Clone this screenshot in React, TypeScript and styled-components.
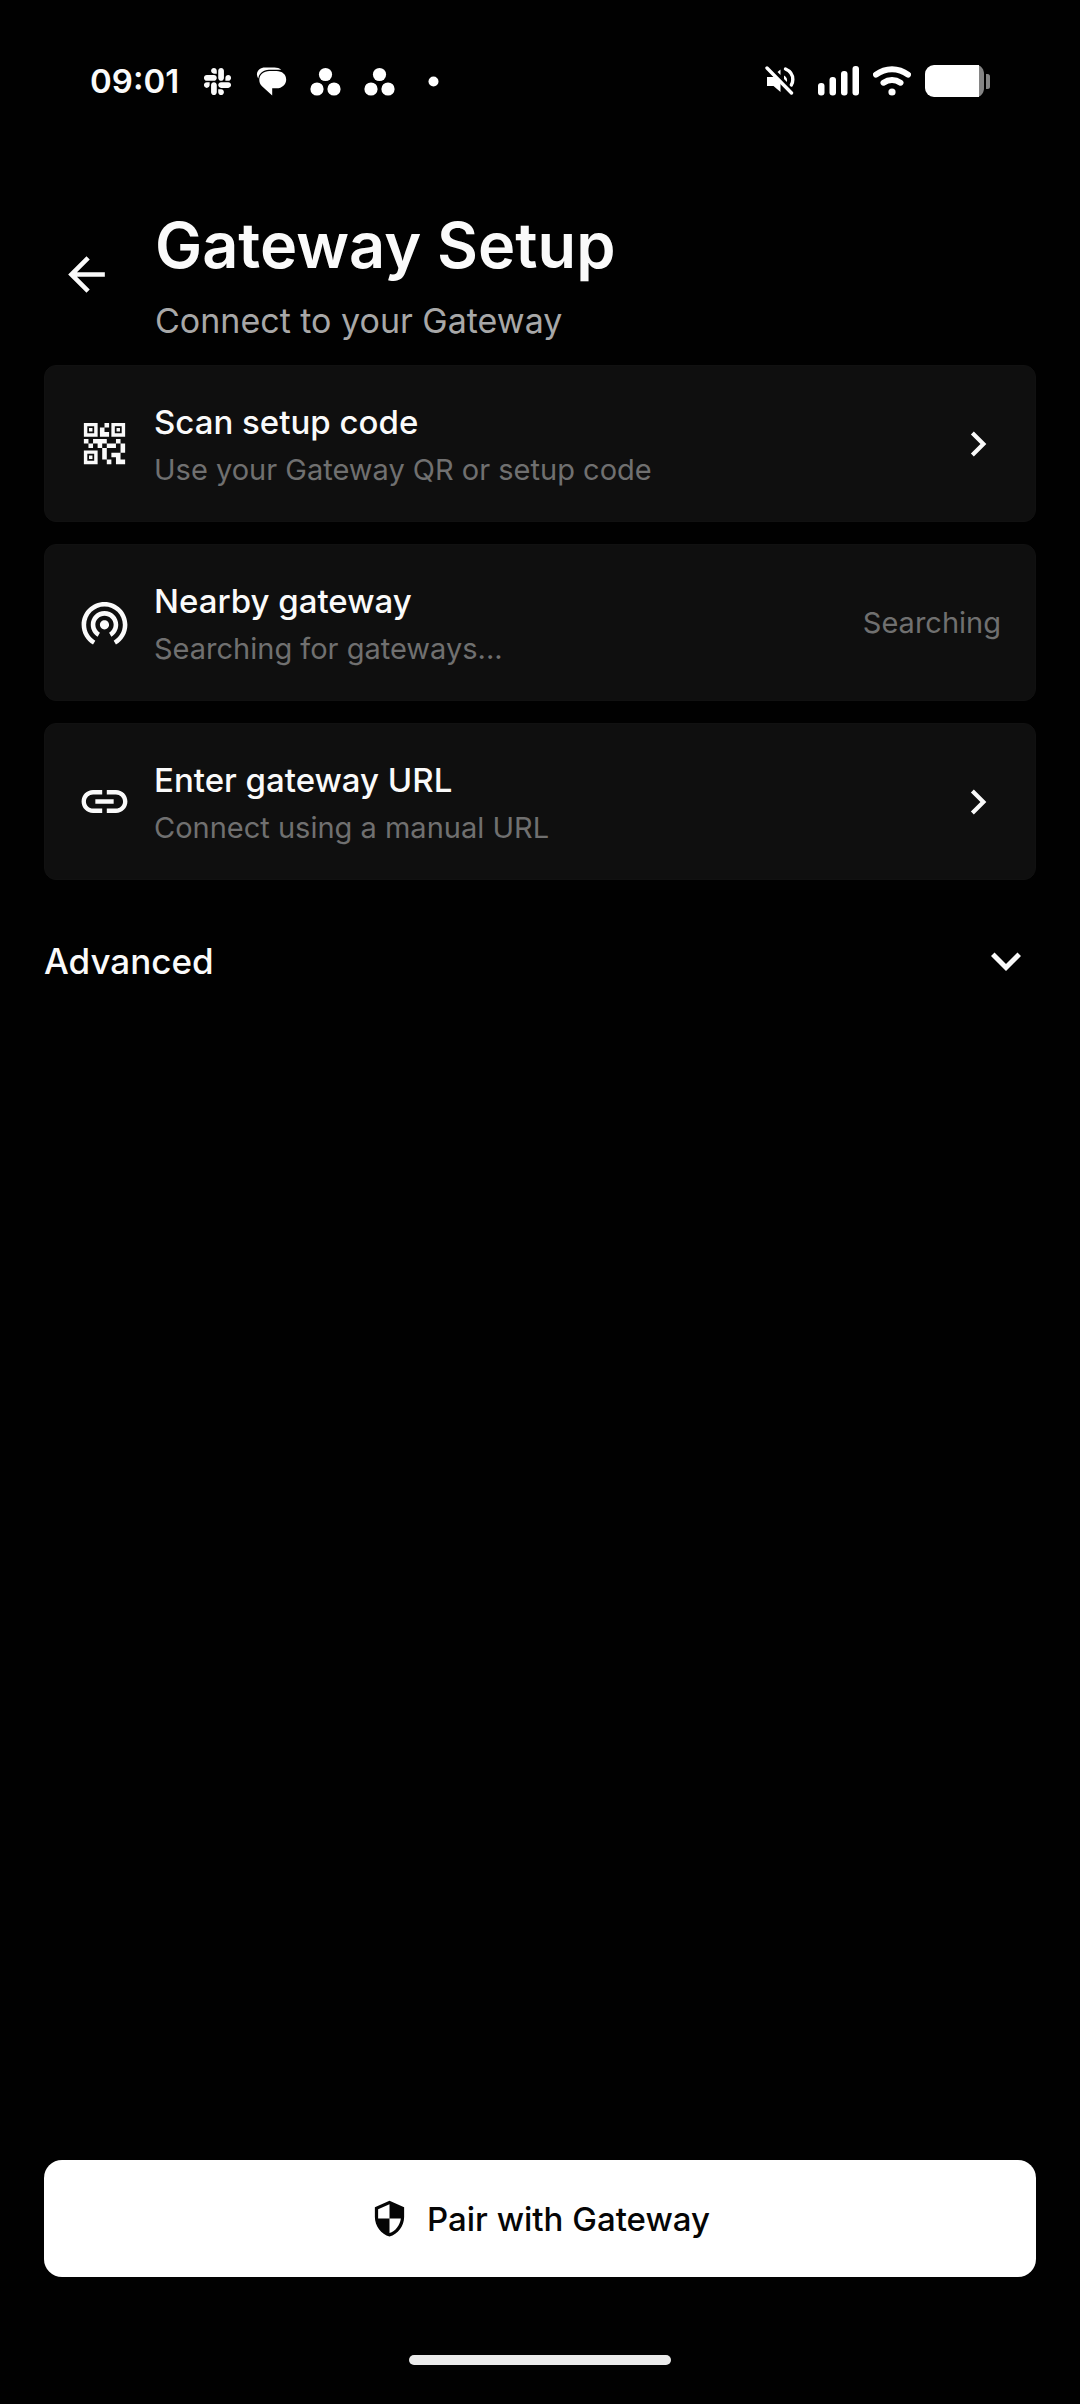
import React, { useState } from "react";
import type { ReactNode } from "react";
import styled, { createGlobalStyle } from "styled-components";
import {
  MdArrowBack,
  MdChevronRight,
  MdExpandMore,
  MdLink,
  MdQrCode2,
  MdSecurity,
  MdWifiTethering,
} from "react-icons/md";
import { FaSlack } from "react-icons/fa";

const colors = {
  page: "#010101",
  card: "#0f0f0f",
  cardEdge: "#111111",
  text: "#fafafa",
  secondary: "#a8a8a8",
  muted: "#707070",
};

const GlobalStyle = createGlobalStyle`
  *, *::before, *::after { box-sizing: border-box; }
  body {
    margin: 0;
    background: ${colors.page};
    color: ${colors.text};
    font-family: Inter, "Noto Sans", sans-serif;
  }
  button { font: inherit; color: inherit; border: 0; cursor: pointer; }
  svg { display: block; flex-shrink: 0; }
  h1, h2, p { margin: 0; }
`;

const Screen = styled.div`
  display: flex;
  flex-direction: column;
  min-height: 100vh;
  padding-bottom: 39px;
`;

const StatusBar = styled.div`
  display: flex;
  align-items: center;
  justify-content: space-between;
  height: 162px;
  padding: 0 90px;
`;

const StatusGroup = styled.div<{ $gap: number }>`
  display: flex;
  align-items: center;
  gap: ${({ $gap }) => $gap}px;
`;

const Clock = styled.time`
  font-size: 33px;
  line-height: 40px;
  font-weight: 600;
`;

const Main = styled.main`
  display: flex;
  flex-direction: column;
  flex: 1;
  gap: 22px;
  padding: 43px 44px 0;
`;

const Header = styled.header`
  display: flex;
  align-items: center;
  gap: 27px;
`;

const BackButton = styled.button`
  display: flex;
  align-items: center;
  justify-content: center;
  width: 84px;
  height: 84px;
  padding: 0;
  border-radius: 50%;
  background: transparent;
`;

const HeaderText = styled.div`
  display: flex;
  flex-direction: column;
  gap: 14px;
`;

const Title = styled.h1`
  font-size: 63px;
  line-height: 80px;
  font-weight: 600;
`;

const Subtitle = styled.p`
  font-size: 34px;
  line-height: 44px;
  color: ${colors.secondary};
`;

const OptionCard = styled.button`
  display: flex;
  align-items: center;
  gap: 22px;
  width: 100%;
  min-height: 157px;
  padding: 28px 32px;
  border: 1px solid ${colors.cardEdge};
  border-radius: 12px;
  background: ${colors.card};
  text-align: left;
`;

const OptionText = styled.span`
  display: flex;
  flex-direction: column;
  flex: 1;
`;

const OptionTitle = styled.span`
  font-size: 33px;
  line-height: 52px;
  font-weight: 500;
`;

const OptionHint = styled.span`
  font-size: 29px;
  line-height: 44px;
  color: ${colors.muted};
`;

const OptionStatus = styled(OptionHint)`
  padding-right: 2px;
`;

const AdvancedToggle = styled.button`
  display: flex;
  align-items: center;
  justify-content: space-between;
  padding: 29px 0;
  background: transparent;
  font-size: 35px;
  line-height: 52px;
  font-weight: 500;
`;

const Footer = styled.footer`
  display: flex;
  flex-direction: column;
  align-items: center;
  gap: 78px;
  padding: 0 44px;
`;

const PairButton = styled.button`
  display: flex;
  align-items: center;
  justify-content: center;
  gap: 18px;
  width: 100%;
  min-height: 117px;
  border-radius: 18px;
  background: #ffffff;
  color: #050505;
  font-size: 33px;
  line-height: 44px;
  font-weight: 500;
`;

const HomeIndicator = styled.div`
  width: 262px;
  height: 10px;
  border-radius: 5px;
  background: #ebebeb;
`;

const SignalGroup = styled(StatusGroup)`
  padding-left: 9px;
`;

const ChatIcon = () => (
  <svg width="31" height="31" viewBox="0 0 31 31" aria-hidden="true" fill="#fff">
    <path d="M9 1.600h9.500c2.600 0 5 .8 6.800 2.200H13C7.200 4 3.200 7.200 2.300 12.400A9 9 0 0 1 .9 8.500C1.200 4.200 4.800 1.600 9 1.600z" />
    <path d="M13.500 4.900h7c5.600 0 9.700 3.500 9.700 8.500s-4.100 8.800-9.700 8.800H16.200v7.400L6 20.200c-2-1.700-2.700-4-2.700-6.500 0-5.300 4.400-8.800 10.200-8.800z" />
  </svg>
);

const AsanaIcon = () => (
  <svg width="31" height="31" viewBox="0 0 31 31" aria-hidden="true" fill="#fff">
    <circle cx="15.500" cy="8.500" r="6.600" />
    <circle cx="7" cy="23" r="6.600" />
    <circle cx="24" cy="23" r="6.600" />
  </svg>
);

const DotIcon = () => (
  <svg width="31" height="31" viewBox="0 0 31 31" aria-hidden="true">
    <circle cx="15.500" cy="15.500" r="5" fill="#fff" />
  </svg>
);

const MutedIcon = () => (
  <svg width="30" height="32" viewBox="0 0 30 32" aria-hidden="true" fill="none">
    <path d="M2 12h7l6.500 6v9L8.500 21H2z" fill="#fff" />
    <path d="M12.500 7 15.500 4.500v5.500z" fill="#fff" />
    <path d="M20.500 4c4.600 2 7.300 6 7.300 10.500 0 2.200-.5 4-1.500 5.500" stroke="#fff" strokeWidth="3.400" strokeLinecap="round" />
    <path d="M19 10.500c2.600 1.500 3.600 3.800 2.900 6.500L19 14z" fill="#fff" />
    <path d="M4.500 1.800 28.800 26.500" stroke="#010101" strokeWidth="2" />
    <path d="M2 3l24.500 25" stroke="#fff" strokeWidth="3.400" strokeLinecap="round" />
  </svg>
);

const SignalIcon = () => (
  <svg width="41" height="30" viewBox="0 0 41 30" aria-hidden="true" fill="#fff">
    <rect x="0" y="17" width="6.500" height="12.500" rx="3" />
    <rect x="11.500" y="11" width="6.500" height="18.500" rx="3" />
    <rect x="23" y="5" width="6.500" height="24.500" rx="3" />
    <rect x="34.500" y="0" width="6.500" height="29.500" rx="3" />
  </svg>
);

const WifiIcon = () => (
  <svg width="38" height="30" viewBox="0 0 38 30" aria-hidden="true" fill="none" stroke="#fff" strokeWidth="6" strokeLinecap="round">
    <path d="M3 8.600c9.600-7.200 22.400-7.200 32 0" />
    <path d="M10.500 16.700c5.200-3.500 11.800-3.500 17 0" />
    <circle cx="19" cy="26" r="3.600" fill="#fff" stroke="none" />
  </svg>
);

const BatteryIcon = () => (
  <svg width="65" height="32" viewBox="0 0 65 32" aria-hidden="true">
    <path d="M9 0h45v32H9a9 9 0 0 1-9-9V9a9 9 0 0 1 9-9z" fill="#fff" />
    <path d="M54 .5c3 1.200 5 4.500 5 8.500v14c0 4-2 7.300-5 8.500z" fill="#858585" />
    <path d="M61 9h1.500a2.500 2.500 0 0 1 2.500 2.500v10a2.500 2.500 0 0 1-2.500 2.500H61z" fill="#858585" />
  </svg>
);

interface OptionProps {
  icon: ReactNode;
  title: string;
  hint: string;
  trailing: ReactNode;
}

const Option = ({ icon, title, hint, trailing }: OptionProps) => (
  <OptionCard type="button">
    {icon}
    <OptionText>
      <OptionTitle>{title}</OptionTitle>
      <OptionHint>{hint}</OptionHint>
    </OptionText>
    {trailing}
  </OptionCard>
);

export default function App() {
  const [advancedOpen, setAdvancedOpen] = useState(false);

  return (
    <>
      <GlobalStyle />
      <Screen>
        <StatusBar>
          <StatusGroup $gap={23}>
            <Clock>09:01</Clock>
            <FaSlack size={31} />
            <ChatIcon />
            <AsanaIcon />
            <AsanaIcon />
            <DotIcon />
          </StatusGroup>
          <StatusGroup $gap={14}>
            <MutedIcon />
            <SignalGroup $gap={14}>
              <SignalIcon />
              <WifiIcon />
              <BatteryIcon />
            </SignalGroup>
          </StatusGroup>
        </StatusBar>
        <Main>
          <Header>
            <BackButton type="button" aria-label="Back">
              <MdArrowBack size={55} />
            </BackButton>
            <HeaderText>
              <Title>Gateway Setup</Title>
              <Subtitle>Connect to your Gateway</Subtitle>
            </HeaderText>
          </Header>
          <Option
            icon={<MdQrCode2 size={55} />}
            title="Scan setup code"
            hint="Use your Gateway QR or setup code"
            trailing={<MdChevronRight size={50} />}
          />
          <Option
            icon={<MdWifiTethering size={55} />}
            title="Nearby gateway"
            hint="Searching for gateways..."
            trailing={<OptionStatus>Searching</OptionStatus>}
          />
          <Option
            icon={<MdLink size={55} />}
            title="Enter gateway URL"
            hint="Connect using a manual URL"
            trailing={<MdChevronRight size={50} />}
          />
          <AdvancedToggle
            type="button"
            aria-expanded={advancedOpen}
            onClick={() => setAdvancedOpen(!advancedOpen)}
          >
            Advanced
            <MdExpandMore size={60} />
          </AdvancedToggle>
        </Main>
        <Footer>
          <PairButton type="button">
            <MdSecurity size={39} />
            Pair with Gateway
          </PairButton>
          <HomeIndicator />
        </Footer>
      </Screen>
    </>
  );
}
